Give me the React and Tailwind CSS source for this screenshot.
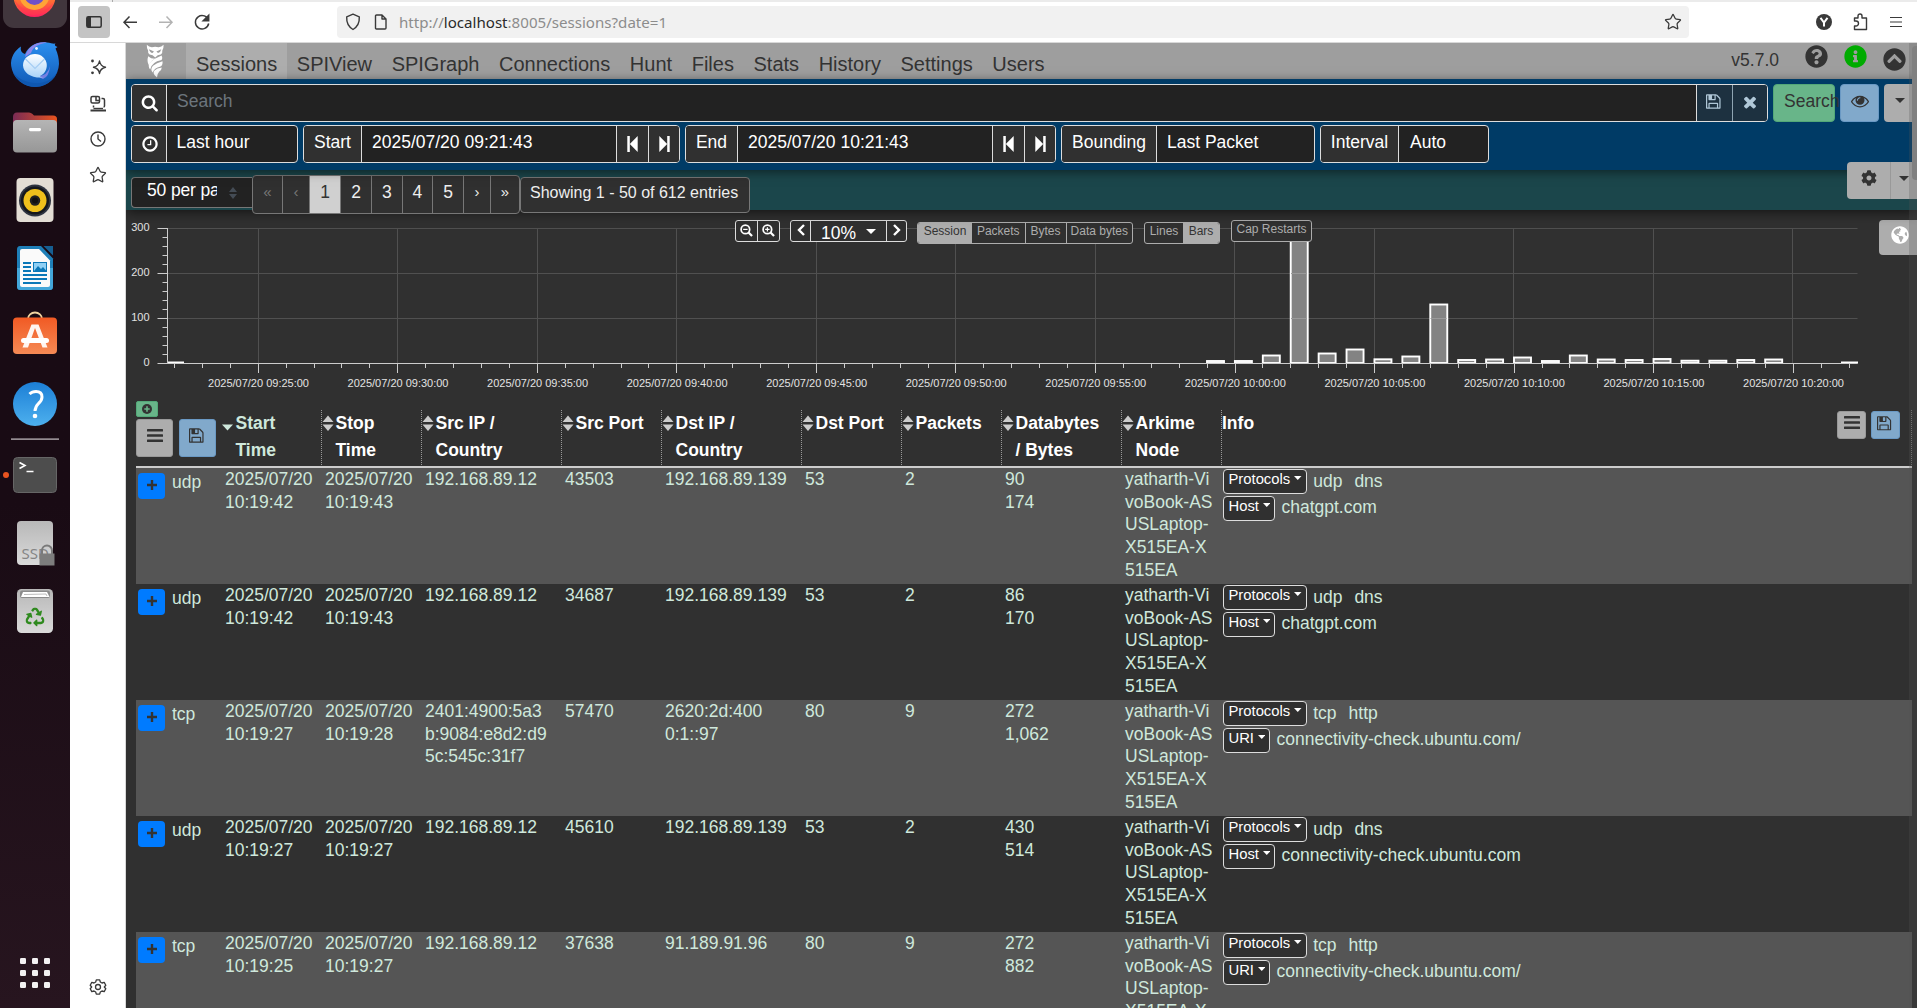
import React from "react";
import {
  FaQuestionCircle,
  FaInfoCircle,
  FaChevronCircleUp,
  FaCog,
  FaGlobeAmericas,
  FaRecycle,
} from "react-icons/fa";
import { Star } from "lucide-react";

const PATHS = {
  save: "M384 1536h768v-384h-768v384zm896 0h128v-896q0-14-10-38.5t-20-34.5l-281-281q-10-10-34-20t-39-10v416q0 40-28 68t-68 28h-576q-40 0-68-28t-28-68v-416h-128v1280h128v-416q0-40 28-68t68-28h832q40 0 68 28t28 68v416zm-384-928v-320q0-13-9.5-22.5t-22.5-9.5h-192q-13 0-22.5 9.5t-9.5 22.5v320q0 13 9.5 22.5t22.5 9.5h192q13 0 22.5-9.5t9.5-22.5zm640 32v928q0 40-28 68t-68 28h-1344q-40 0-68-28t-28-68v-1344q0-40 28-68t68-28h928q40 0 88 20t76 48l280 280q28 28 48 76t20 88z",
  search:
    "M1216 832q0-185-131.5-316.5t-316.5-131.5-316.5 131.5-131.5 316.5 131.5 316.5 316.5 131.5 316.5-131.5 131.5-316.5zm512 832q0 52-38 90t-90 38q-54 0-90-38l-343-342q-179 124-399 124-143 0-273.5-55.5t-225-150-150-225-55.5-273.5 55.5-273.5 150-225 225-150 273.5-55.5 273.5 55.5 225 150 150 225 55.5 273.5q0 220-124 399l343 343q37 37 37 90z",
  clock:
    "M1024 544v448q0 14-9 23t-23 9h-320q-14 0-23-9t-9-23v-64q0-14 9-23t23-9h224v-352q0-14 9-23t23-9h64q14 0 23 9t9 23zm416 352q0-148-73-273t-198-198-273-73-273 73-198 198-73 273 73 273 198 198 273 73 273-73 198-198 73-273zm224 0q0 209-103 385.5t-279.5 279.5-385.5 103-385.5-103-279.5-279.5-103-385.5 103-385.5 279.5-279.5 385.5-103 385.5 103 279.5 279.5 103 385.5z",
  times:
    "M1490 1322q0 40-28 68l-136 136q-28 28-68 28t-68-28l-294-294-294 294q-28 28-68 28t-68-28l-136-136q-28-28-28-68t28-68l294-294-294-294q-28-28-28-68t28-68l136-136q28-28 68-28t68 28l294 294 294-294q28-28 68-28t68 28l136 136q28 28 28 68t-28 68l-294 294 294 294q28 28 28 68z",
  eye: "M1664 960q-152-236-381-353 61 104 61 225 0 185-131.5 316.5t-316.5 131.5-316.5-131.5-131.5-316.5q0-121 61-225-229 117-381 353 133 205 333.5 326.5t434.5 121.5 434.5-121.5 333.5-326.5zm-720-384q0-20-14-34t-34-14q-125 0-214.5 89.5t-89.5 214.5q0 20 14 34t34 14 34-14 14-34q0-86 61-147t147-61q20 0 34-14t14-34zm848 384q0 34-20 69-140 230-376.5 368.5t-499.5 138.5-499.5-139-376.5-368q-20-35-20-69t20-69q140-229 376.5-368t499.5-139 499.5 139 376.5 368q20 35 20 69z",
};

const Glyph = ({ name, size = 18, className = "" }) => (
  <svg viewBox="0 0 1792 1792" width={size} height={size} fill="currentColor" className={`shrink-0 ${className}`}>
    <path d={PATHS[name]} />
  </svg>
);

const Caret = ({ w = 12, h = 6, className = "" }) => (
  <svg viewBox="0 0 12 6" width={w} height={h} fill="currentColor" className={className} preserveAspectRatio="none">
    <path d="M0 0H12L6 6Z" />
  </svg>
);

const Bars = ({ className = "" }) => (
  <svg viewBox="0 0 16 14" width="16" height="14" fill="currentColor" className={className}>
    <rect width="16" height="2.6" rx=".5" />
    <rect y="5.2" width="16" height="2.6" rx=".5" />
    <rect y="10.4" width="16" height="2.6" rx=".5" />
  </svg>
);

/* ---------- Ubuntu dock ---------- */
function Dock() {
  return (
    <div className="h-full w-[70px] shrink-0 overflow-hidden bg-linear-to-b from-[#190b14] from-50% to-[#27151f]">
      <svg width="70" height="1008" viewBox="0 0 70 1008">
        <defs>
          <linearGradient id="fx" x1="0" y1="0" x2="0" y2="1">
            <stop offset="0" stopColor="#ffb52e" />
            <stop offset=".65" stopColor="#ff6a35" />
            <stop offset="1" stopColor="#ff2060" />
          </linearGradient>
          <linearGradient id="tb" x1="0" y1="0" x2="0" y2="1">
            <stop offset="0" stopColor="#2b8fef" />
            <stop offset="1" stopColor="#1059b5" />
          </linearGradient>
          <linearGradient id="en" x1="0" y1="0" x2="0" y2="1">
            <stop offset="0" stopColor="#ffffff" />
            <stop offset="1" stopColor="#a9d3f8" />
          </linearGradient>
          <linearGradient id="gr" x1="0" y1="0" x2="0" y2="1">
            <stop offset="0" stopColor="#b5b5b5" />
            <stop offset="1" stopColor="#979797" />
          </linearGradient>
          <linearGradient id="fo" x1="0" y1="0" x2="1" y2="0">
            <stop offset="0" stopColor="#7a2b55" />
            <stop offset="1" stopColor="#e8541f" />
          </linearGradient>
          <linearGradient id="hp" x1="0" y1="0" x2="0" y2="1">
            <stop offset="0" stopColor="#1c7fd6" />
            <stop offset="1" stopColor="#4db0ee" />
          </linearGradient>
          <linearGradient id="sw" x1="0" y1="0" x2="0" y2="1">
            <stop offset="0" stopColor="#f15a24" />
            <stop offset="1" stopColor="#f58a55" />
          </linearGradient>
          <linearGradient id="tr" x1="0" y1="0" x2="0" y2="1">
            <stop offset="0" stopColor="#b8b8b8" />
            <stop offset="1" stopColor="#dadada" />
          </linearGradient>
        </defs>
        <rect x="3" y="-20" width="64" height="48" rx="11" fill="#41363d" />
        <circle cx="34.500" cy="-4" r="21" fill="url(#fx)" />
        <path d="M14.500 0A21 21 0 0 0 54 2Q44 15 30 11 20 8 14.500 0Z" fill="#ff3a4e" opacity=".55" />
        <circle cx="34.500" cy="-5" r="15" fill="#ffa436" />
        <circle cx="34.500" cy="-5" r="10" fill="#7050c8" />
        {/* Thunderbird */}
        <path d="M11.200 66C10 58 15 50 21 46.500C20 51 22 53 25 54C29 45 38 41 47 42.500C51 43 53 44 55.500 43.500C54 45 55 46 57.500 47L55.500 48.500C58 54 59 59 59 64A24 24 0 0 1 11.200 66Z" fill="url(#tb)" />
        <path d="M13 72A24 24 0 0 0 58 70C54 80 44 84 34 83 24 82 16 77 13 72Z" fill="#0f57b0" />
        <path d="M25 57C27 47 37 41 47 42.500C38 44 33 47 31 53Z" fill="#8d87ea" />
        <path d="M37 76Q48 76 50 66Q49 77 43 79Z" fill="#8d87ea" opacity=".8" />
        <path d="M35 54A12 11.500 0 0 0 23 65.500C23.500 73 31 78.500 44 77.500C41 77 39.500 76.500 40 76C44 74.500 47 70 46.800 65A12 11.500 0 0 0 35 54Z" fill="url(#en)" />
        <path d="M25.500 59L35 68.500L44.500 59" fill="none" stroke="#a5cdf3" strokeWidth="1.200" />
        <circle cx="36.500" cy="48.500" r="1.400" fill="#e6f4ff" />
        {/* Files */}
        <path d="M13 117Q13 112.500 17 112.500H29Q31 112.500 32.500 114L34 115.500H53Q57 115.500 57 119V130H13Z" fill="url(#fo)" />
        <rect x="13" y="120" width="44" height="32.500" rx="4" fill="url(#gr)" />
        <rect x="29" y="128" width="12" height="3.200" rx="1.400" fill="#fff" />
        {/* Rhythmbox */}
        <rect x="16.500" y="178" width="37" height="44" rx="4" fill="#e3ded5" />
        <circle cx="35" cy="200.500" r="16" fill="#2e3440" />
        <circle cx="35" cy="200.500" r="14" fill="#15181d" />
        <circle cx="35" cy="200.500" r="11.500" fill="#efc01c" />
        <circle cx="35" cy="200.500" r="5.200" fill="#222" />
        <circle cx="35" cy="200.500" r="3" fill="#111" />
        {/* Writer */}
        <path d="M20 246H41L53 258.500V286.500Q53 290 49.500 290H20.500Q17 290 17 286.500V249.500Q17 246 20 246Z" fill="#1e7fb8" />
        <path d="M17 268H53V286.500Q53 290 49.500 290H20.500Q17 290 17 286.500Z" fill="#43a6d9" />
        <path d="M43.500 246H53V255.500Z" fill="#165f92" />
        <path d="M22 249H39L50 260.500V285Q50 287 48 287H22Q20 287 20 285V251Q20 249 22 249Z" fill="#fafafa" />
        <path d="M23 263H31M23 267H31M23 271H31M23 275H47M23 279H47M23 283H41" stroke="#0b78b8" strokeWidth="1.900" />
        <rect x="33.500" y="262.500" width="13" height="9" fill="#8fd0f5" stroke="#0b78b8" />
        <path d="M34 271L38 266L41 269L43 267L46.500 271Z" fill="#0b78b8" />
        {/* Software */}
        <path d="M28 321V319A7 6.500 0 0 1 42 319V321" fill="none" stroke="#f1d4a0" strokeWidth="1.800" />
        <rect x="13" y="317.500" width="44" height="36.500" rx="4" fill="url(#sw)" />
        <path d="M31.500 324.500H38.500L47.500 347.500H42.500L35 328L28 347.500H22.500Z" fill="#fff" fillOpacity=".93" />
        <rect x="21" y="338" width="28" height="5" rx="2.500" fill="#fff" />
        {/* Help */}
        <circle cx="35" cy="404" r="22" fill="url(#hp)" />
        <path d="M29.500 394Q32 391.500 36 391.500Q42 391.500 42 397Q42 400.500 38.500 403.500Q35.300 406.500 35 411" fill="none" stroke="#fff" strokeWidth="3" />
        <circle cx="35" cy="416" r="2.300" fill="#fff" />
        <rect x="11" y="438.500" width="48" height="1.200" fill="#c9c4c7" />
        {/* Terminal */}
        <circle cx="6" cy="475" r="3" fill="#e95420" />
        <rect x="13.500" y="457.500" width="43" height="35" rx="4" fill="#4d4d4d" stroke="#666" />
        <path d="M19.500 462.500L25 465.500L19.500 468.500M26.500 471.500H33.500" fill="none" stroke="#fff" strokeWidth="1.600" />
        {/* SSD */}
        <rect x="17" y="521" width="36" height="44" rx="4" fill="url(#tr)" />
        <text x="21.500" y="559" fontSize="15" fill="#858585" fontFamily="Noto Sans">SSD</text>
        <path d="M42 555V550.500A5 5 0 0 1 52 550.500V555" fill="none" stroke="#7a7a7a" strokeWidth="2" />
        <rect x="39.500" y="553.500" width="15" height="12" fill="#7d7d7d" />
        {/* Trash */}
        <rect x="17" y="589" width="36" height="44" rx="4.500" fill="url(#tr)" />
        <rect x="20" y="590.500" width="30" height="7.500" rx="2" fill="#8b8b8b" />
        <path d="M23 592H47L49.500 597H21Z" fill="#fff" />
        <path d="M24 594.500L46 594L47 596" fill="none" stroke="#aaa" strokeWidth=".8" />
        <g transform="translate(25.500 607.500)">
          <FaRecycle size={19} color="#2f8a1f" />
        </g>
        {[0, 1, 2].map((r) =>
          [0, 1, 2].map((c) => (
            <rect key={`${r}${c}`} x={20 + c * 12} y={958 + r * 12} width="6" height="6" rx="1.300" fill="#f3f1f2" />
          ))
        )}
      </svg>
    </div>
  );
}

/* ---------- Browser chrome ---------- */
function Toolbar() {
  return (
    <div className="flex h-[42px] shrink-0 flex-col bg-white">
      <div className="flex h-[2px] bg-[#ebebeb]">
        <div className="ml-[42px] h-[2px] w-px bg-[#aaa]" />
      </div>
      <div className="flex h-10 items-center text-[#3a3a3a]">
        <div className="ml-2 flex h-8 w-8 items-center justify-center rounded-[4px] bg-[#c4c4c4]">
          <svg width="16" height="12" viewBox="0 0 16 12">
            <rect x=".8" y=".8" width="14.400" height="10.400" rx="1.500" fill="none" stroke="#333" strokeWidth="1.500" />
            <rect x="1" y="1" width="4" height="10" fill="#333" />
          </svg>
        </div>
        <svg width="110" height="32" viewBox="110 6 110 32" fill="none" stroke="currentColor" strokeWidth="1.500">
          <path d="M137 22.200H124M129.500 16.500L124 22.200L129.500 27.900" />
          <path d="M159 22.200H172M166.500 16.500L172 22.200L166.500 27.900" stroke="#b3b3b3" />
          <path d="M208.600 20.500A6.700 6.700 0 1 0 208.700 23.500M208.700 15.200V20.700H203.200Z" />
          <path d="M209 15V21H203Z" fill="currentColor" stroke="none" />
        </svg>
        <div className="ml-[117px] flex h-8 w-[1352px] items-center rounded-[4px] bg-[#f1f1f1]">
          <svg className="ml-2" width="16" height="18" viewBox="0 0 16 18" fill="none" stroke="currentColor" strokeWidth="1.400">
            <path d="M8 1.200L14.300 3.800Q14.800 12.500 8 16.500Q1.200 12.500 1.700 3.800Z" strokeLinejoin="round" />
          </svg>
          <svg className="ml-[13px]" width="14" height="16" viewBox="0 0 14 16" fill="none" stroke="currentColor" strokeWidth="1.400" strokeLinejoin="round">
            <path d="M2.500 1H8L12 5V14Q12 15 11 15H2.500Q1.500 15 1.500 14V2Q1.500 1 2.500 1ZM8 1V5H12" />
          </svg>
          <span className="ml-[11px] whitespace-nowrap pt-px font-['Noto_Sans',sans-serif] text-[15.100px] text-[#8c8c8c]">
            http://<span className="text-[#2a2a2a]">localhost</span>:8005/sessions?date=1
          </span>
          <Star size={18} strokeWidth={1.7} className="ml-auto mr-[7px]" />
        </div>
        <svg className="ml-[127px]" width="16" height="16" viewBox="0 0 16 16">
          <circle cx="8" cy="8" r="8" fill="#3a3a3a" />
          <path d="M4.500 3.800L8 8.500L11.500 3.800M8 8.300V12.500" stroke="#fff" strokeWidth="2" fill="none" />
        </svg>
        <svg className="ml-[21px]" width="15" height="18" viewBox="0 0 15 18" fill="none" stroke="currentColor" strokeWidth="1.400" strokeLinejoin="round">
          <path d="M1.500 8V5H5V3A2 2 0 0 1 9 3V5H13.500V16.500H1.500V13H3A2.300 2.300 0 0 0 3 8Z" />
        </svg>
        <svg className="ml-[22px]" width="12" height="12" viewBox="0 0 12 12" stroke="currentColor" strokeWidth="1.200">
          <path d="M0 1.500H12M0 6H12M0 10.500H12" />
        </svg>
      </div>
    </div>
  );
}

function SideStrip() {
  return (
    <div className="flex w-14 shrink-0 flex-col items-center border-r border-[#d8d8d8] bg-white text-[#3a3a3a]">
      <svg className="mt-[15px]" width="18" height="18" viewBox="0 0 18 18">
        <path d="M10.500 3Q11.300 8 16.500 9.300Q11.300 10.500 10.500 15.500Q9.700 10.500 4.500 9.300Q9.700 8 10.500 3Z" fill="none" stroke="currentColor" strokeWidth="1.400" strokeLinejoin="round" />
        <circle cx="3.500" cy="3" r="1.400" fill="currentColor" />
        <circle cx="3.500" cy="14.800" r="1.400" fill="currentColor" />
      </svg>
      <svg className="mt-[19px]" width="18" height="18" viewBox="0 0 18 18" fill="none" stroke="currentColor" strokeWidth="1.500">
        <rect x="2" y="1.500" width="8.500" height="6.500" rx="1.500" />
        <path d="M7 1.500V5.500H10.500M12.500 3.500H14Q15.500 3.500 15.500 5V11Q15.500 12 14.500 12M4.500 12.500V10.500" />
        <path d="M1.500 15.500H17" strokeWidth="2" />
        <path d="M4.500 13.500H14" strokeWidth="1.400" />
      </svg>
      <svg className="mt-[17px]" width="18" height="18" viewBox="0 0 18 18" fill="none" stroke="currentColor" strokeWidth="1.400">
        <circle cx="9" cy="9" r="7" />
        <path d="M9 4.500V9L12 11.500" />
      </svg>
      <Star size={18} strokeWidth={1.7} className="mt-[18px]" />
      <svg className="mb-[12px] mt-auto" width="18" height="18" viewBox="0 0 18 18" fill="none" stroke="currentColor" strokeWidth="1.300">
        <circle cx="9" cy="9" r="2.500" />
        <path d="M7.300 1.800H10.700L11.300 4L13 5L15.200 4.400L16.800 7.300L15.300 9L16.800 10.700L15.200 13.600L13 13L11.300 14L10.700 16.200H7.300L6.700 14L5 13L2.800 13.600L1.200 10.700L2.700 9L1.200 7.300L2.800 4.400L5 5L6.700 4Z" strokeLinejoin="round" />
      </svg>
    </div>
  );
}

/* ---------- Arkime header ---------- */
const NAV = ["SPIView", "SPIGraph", "Connections", "Hunt", "Files", "Stats", "History", "Settings", "Users"];

function NavBar() {
  return (
    <div className="flex h-9 shrink-0 bg-[#9e9e9e] text-[20px] leading-[30px] text-[#333]">
      <div className="w-[60px]">
        <svg width="60" height="36" viewBox="126 43 60 36" fill="#fff">
          <path d="M146.800 44.800Q149 47.300 152 47.200Q155.200 46.200 158.400 47.200Q161.500 47.300 163.600 44.800Q163.800 48.500 162.300 50.500Q162.800 53 160.800 54.600Q157.500 54.800 155.200 57.600Q152.800 54.800 149.600 54.600Q147.600 53 148.100 50.500Q146.600 48.500 146.800 44.800Z" />
          <path d="M149 49.200L154 51.500L152.500 53Q149.800 52.500 149 49.200ZM161.300 49.200L156.400 51.500L158 53Q160.500 52.500 161.300 49.200Z" fill="#9e9e9e" />
          <path d="M148.200 56.200Q146.500 61.500 149 65.500Q150.500 60.500 155.500 58.800Q151 59 148.200 56.200Z" />
          <path d="M161.600 55.500Q163 58 161.600 60Q151.500 62 150.200 69.500Q147 65.500 151 61.500Q154.500 58.500 161.600 55.500Z" />
          <path d="M162.500 61.200Q163 65 160.500 66.500Q154 68 152.800 72.500Q149.800 69.500 153 65.800Q156.500 62.800 162.500 61.200Z" />
          <path d="M161.800 67.500Q161.500 70.500 159.300 71.500Q157 74 157 77.400Q151.800 73.500 154.500 70.500Q157 68 161.800 67.500Z" />
        </svg>
      </div>
      <div className="h-9 w-[101px] bg-[#adadad] pl-2.5 pt-[6px]">Sessions</div>
      {NAV.map((n) => (
        <div key={n} className="px-[9.800px] pt-[6px]">
          {n}
        </div>
      ))}
      <div className="ml-auto pt-[1.500px] text-[17.500px]">v5.7.0</div>
      <FaQuestionCircle size={23} className="ml-[26px] mt-[2px]" />
      <FaInfoCircle size={23} className="ml-[16px] mt-[2px] text-[#00ab00]" />
      <FaChevronCircleUp size={23} className="ml-[16px] mr-[11px] mt-[5px]" />
    </div>
  );
}

const group = "flex h-[38px] shrink-0 overflow-hidden rounded-[4px] border border-[#ddd] bg-[#222]";
const label = "flex shrink-0 items-center justify-center border-r border-[#ddd] bg-[#303030] pb-1";

const Step = ({ flip }) => (
  <svg width="11" height="16" viewBox="0 0 11 16" fill="currentColor" className={flip ? "-scale-x-100" : ""}>
    <rect x=".3" width="2.500" height="16" />
    <path d="M10.700 0V16L2.800 8Z" />
  </svg>
);

function DateField({ name, value, className, labelClass }) {
  return (
    <div className={`${group} ${className}`}>
      <div className={`${label} ${labelClass}`}>{name}</div>
      <div className="flex flex-1 items-center pb-1 pl-2.5">{value}</div>
      <div className="flex w-8 items-center justify-center border-l border-[#ddd] bg-[#303030]">
        <Step />
      </div>
      <div className="flex w-[31px] items-center justify-center border-l border-[#ddd] bg-[#303030]">
        <Step flip />
      </div>
    </div>
  );
}

function SearchPanel() {
  return (
    <div className="relative z-10 flex h-[91px] shrink-0 flex-col gap-[3px] bg-[#003b66] pl-[5px] pt-[5px] text-[17.500px] text-white shadow-[0_2px_10px_rgba(0,0,0,0.5)]">
      <div className="flex gap-[5px]">
        <div className="flex h-[38px] w-[1637px] shrink-0 overflow-hidden rounded-[4px] border border-[#ddd] bg-[#222]">
          <div className="flex w-[35px] items-center justify-center border-r border-[#ddd] bg-[#303030] pl-px">
            <Glyph name="search" size={17.5} />
          </div>
          <div className="flex flex-1 items-center pb-1 pl-[10px] text-[#6c757d]">Search</div>
          <div className="flex w-9 items-center justify-center border-l border-[#ddd] bg-[#1d3140] pb-[3px] text-[#b0c8d8]">
            <Glyph name="save" size={17} />
          </div>
          <div className="flex w-[35px] items-center justify-center border-l border-[#8fa5b3] bg-[#1d3140] pb-[3px] text-[#b0c8d8]">
            <Glyph name="times" size={18} />
          </div>
        </div>
        <div className="flex h-[38px] w-[62px] shrink-0 items-center whitespace-nowrap rounded-[4px] border border-[#53a878] bg-[#68b589] pb-1 pl-2.5 text-[#333]">
          Search
        </div>
        <div className="flex h-[38px] w-[39px] shrink-0 items-center justify-center rounded-[4px] border border-[#6a99c4] bg-[#81a9cb] pb-1 text-[#333]">
          <Glyph name="eye" size={18} />
        </div>
        <div className="flex h-[38px] flex-1 items-center rounded-l-[4px] bg-[#adadad] pb-1.5 pl-[11px] text-[#333]">
          <Caret w={10} h={5} />
        </div>
      </div>
      <div className="flex gap-[5px]">
        <div className={`${group} w-[167px]`}>
          <div className="flex w-[35px] items-center justify-center border-r border-[#ddd] bg-[#303030] pl-px">
            <Glyph name="clock" size={18} />
          </div>
          <div className="flex items-center pb-1 pl-[9.500px]">Last hour</div>
        </div>
        <DateField name="Start" value="2025/07/20 09:21:43" className="w-[377px]" labelClass="w-[58px]" />
        <DateField name="End" value="2025/07/20 10:21:43" className="w-[371px]" labelClass="w-[52px]" />
        <div className={`${group} w-[254px]`}>
          <div className={`${label} w-[95px]`}>Bounding</div>
          <div className="flex items-center pb-1 pl-2.5">Last Packet</div>
        </div>
        <div className={`${group} w-[169px]`}>
          <div className={`${label} w-[78px]`}>Interval</div>
          <div className="flex items-center pb-1 pl-[11px]">Auto</div>
        </div>
      </div>
      <div className="absolute right-0 top-[83px] flex h-[37px] w-[70px] rounded-l-[4px] bg-[#adadad] text-[#333]">
        <div className="flex w-[44px] items-center justify-center border-r border-[#999] pb-[5px]">
          <FaCog size={16} />
        </div>
        <Caret w={10} h={5} className="ml-2 mt-[14px]" />
      </div>
    </div>
  );
}

const PAGES = [
  ["«", "w-[29px] text-[15px] text-[#777]"],
  ["‹", "w-[27px] text-[15px] text-[#777]"],
  ["1", "w-[31px] bg-[#d0d0d0] text-[#333]"],
  ["2", "w-[31px]"],
  ["3", "w-[30.500px]"],
  ["4", "w-[30.500px]"],
  ["5", "w-[31px]"],
  ["›", "w-[27px] text-[15px]"],
  ["»", "w-[29px] text-[15px]"],
];

function Paging() {
  return (
    <div className="relative z-[5] flex h-10 shrink-0 bg-[#1b464b] pl-[5px] text-[17.500px] text-[#eee] shadow-[0_2px_12px_rgba(0,0,0,0.6)]">
      <div className="mt-[7px] flex h-[31px] w-[121px] items-center rounded-l-[4px] border border-r-0 border-[#777] bg-[#222] pb-1 pl-[15px] text-white">
        <span className="w-[70px] overflow-hidden whitespace-nowrap tracking-[-0.15px]">50 per page</span>
        <svg width="8" height="12" viewBox="0 0 8 12" fill="#444c55" className="ml-[12px] mt-1">
          <path d="M0 5L4 0L8 5ZM0 7H8L4 12Z" />
        </svg>
      </div>
      <div className="mt-[5px] flex h-[39px] shrink-0 overflow-hidden rounded-[4px] border border-[#777] bg-[#303030]">
        {PAGES.map(([t, c], i) => (
          <div key={i} className={`flex items-center justify-center pb-[5px] ${i ? "border-l border-[#777]" : ""} ${c}`}>
            {t}
          </div>
        ))}
      </div>
      <div className="mt-[7px] flex h-[35.500px] w-[230px] items-center rounded-[4px] border border-[#777] bg-[#303030] pb-1 pl-[9px] text-[16px]">
        Showing 1 - 50 of 612 entries
      </div>
    </div>
  );
}

/* ---------- Timeline chart ---------- */
const BAR_TOPS = [
  361, 361, 355.5, 240, 353.5, 349.5, 359.3, 356.5, 304.5, 360, 359.5, 357.5, 361, 355.5, 359.5, 360, 359, 360.7, 360.7, 360, 359.5,
];
const TIMES = ["09:25", "09:30", "09:35", "09:40", "09:45", "09:50", "09:55", "10:00", "10:05", "10:10", "10:15", "10:20"];
const STEP = 27.909;

const ZoomGlass = ({ plus }) => (
  <svg width="13" height="13" viewBox="0 0 14 14" fill="none" stroke="#fff" strokeWidth="1.900">
    <circle cx="5.800" cy="5.800" r="4.600" />
    <path d="M9.200 9.200L13 13" strokeWidth="2.400" />
    <path d={plus ? "M3.400 5.800H8.200M5.800 3.400V8.200" : "M3.400 5.800H8.200"} strokeWidth="1.300" />
  </svg>
);

const Chevron = ({ flip }) => (
  <svg width="8" height="12" viewBox="0 0 8 12" fill="none" stroke="#fff" strokeWidth="2.400" className={flip ? "-scale-x-100" : ""}>
    <path d="M7 1L2 6L7 11" />
  </svg>
);

function Timeline() {
  return (
    <div className="relative h-[190px] shrink-0">
      <svg width="1791" height="190" viewBox="126 210 1791 190" fontFamily="Liberation Sans" fontSize="11">
        {[228.5, 273.5, 318.5].map((y) => (
          <path key={y} d={`M168 ${y}H1857.500`} stroke="#505050" />
        ))}
        {TIMES.map((t, i) => (
          <path key={t} d={`M${Math.floor(258 + i * 139.545) + 0.5} 228V363`} stroke="#505050" />
        ))}
        {BAR_TOPS.map((y, i) => (
          <rect key={i} x={1207 + i * STEP} y={y} width="17" height={363 - y} fill="#838383" stroke="#fff" strokeWidth="1.900" />
        ))}
        <path d="M1291 273.500H1307" stroke="#9a9a9a" />
        <path d="M1291 318.500H1307M1430.500 318.500H1446.500" stroke="#9a9a9a" />
        <path d="M167 362.500H184M1841 362.500H1858" stroke="#fff" strokeWidth="2" />
        <path d="M167.500 228V363.500H1857.500" fill="none" stroke="#ccc" />
        {Array.from({ length: 16 }, (_, i) => (
          <path key={i} d={`M${i % 5 ? 162.5 : 157.5} ${228.5 + i * 9}H167.500`} stroke="#ccc" />
        ))}
        {Array.from({ length: 61 }, (_, i) => (
          <path key={i} d={`M${Math.floor(174.5 + i * STEP) + 0.5} 363V${(i + 2) % 5 ? 368 : 373}`} stroke="#ccc" />
        ))}
        {["300", "200", "100", "0"].map((t, i) => (
          <text key={t} x="149.500" y={231 + i * 45} textAnchor="end" fill="#e3e3e3">
            {t}
          </text>
        ))}
        {TIMES.map((t, i) => (
          <text key={t} x={258.5 + i * 139.545} y="387" textAnchor="middle" fill="#e3e3e3">
            {`2025/07/20 ${t}:00`}
          </text>
        ))}
      </svg>
      <div className="absolute left-[609px] top-[10px] flex h-[23px] items-start text-[12px] leading-[17px] text-[#adadad]">
        <div className="flex h-[22px] w-[45px] rounded-[3px] border border-[#ddd] bg-[#303030]">
          <div className="flex flex-1 items-center justify-center border-r border-[#ddd] pb-0.5">
            <ZoomGlass />
          </div>
          <div className="flex flex-1 items-center justify-center pb-0.5">
            <ZoomGlass plus />
          </div>
        </div>
        <div className="ml-[10px] flex h-[22px] w-[117px] rounded-[3px] border border-[#ddd] bg-[#303030] text-white">
          <div className="flex w-5 items-center justify-center border-r border-[#ddd] pb-0.5">
            <Chevron />
          </div>
          <div className="flex flex-1 items-center pl-[10px] pt-1 text-[17.500px]">
            10%
            <Caret w={10} h={5} className="mb-1 ml-[10px]" />
          </div>
          <div className="flex w-5 items-center justify-center border-l border-[#ddd] pb-0.5">
            <Chevron flip />
          </div>
        </div>
        <div className="ml-[10px] mt-[2px] flex h-[22px] w-[216px] overflow-hidden rounded-[3px] border border-[#adadad] bg-[#303030] text-center">
          <div className="w-[54px] bg-[#adadad] text-[#333]">Session</div>
          <div className="w-[52.500px]">Packets</div>
          <div className="w-[41px] border-l border-[#adadad]">Bytes</div>
          <div className="flex-1 border-l border-[#adadad]">Data bytes</div>
        </div>
        <div className="ml-[11px] mt-[2px] flex h-[22px] w-[76px] overflow-hidden rounded-[3px] border border-[#adadad] bg-[#303030] text-center">
          <div className="w-[38px]">Lines</div>
          <div className="flex-1 bg-[#adadad] text-[#333]">Bars</div>
        </div>
        <div className="ml-[11px] h-[22px] w-[81px] whitespace-nowrap rounded-[3px] border border-[#adadad] bg-[#303030] pl-[4.500px]">
          Cap Restarts
        </div>
      </div>
      <div className="absolute right-0 top-[10px] flex h-[35px] w-[38px] rounded-l-[4px] bg-[#adadad] pl-[12px] pt-[6px] text-white">
        <FaGlobeAmericas size={18} />
      </div>
    </div>
  );
}

/* ---------- Sessions table ---------- */
const COLS = [
  ["Start\nTime", "w-[100px]"],
  ["Stop\nTime", "w-[100px]"],
  ["Src IP /\nCountry", "w-[140px]"],
  ["Src Port", "w-[100px]"],
  ["Dst IP /\nCountry", "w-[140px]"],
  ["Dst Port", "w-[100px]"],
  ["Packets", "w-[100px]"],
  ["Databytes\n/ Bytes", "w-[120px]"],
  ["Arkime\nNode", "w-[100px]"],
];
const NODE = "yatharth-Vi\nvoBook-AS\nUSLaptop-\nX515EA-X\n515EA";
const D = "2025/07/20\n";
const SRC = "192.168.89.12";
const UBUNTU = "connectivity-check.ubuntu.com";
const ROWS = [
  { proto: "udp", cells: [D + "10:19:42", D + "10:19:43", SRC, "43503", "192.168.89.139", "53", "2", "90\n174", NODE], info: ["udp", "dns", "Host", "chatgpt.com"] },
  { proto: "udp", cells: [D + "10:19:42", D + "10:19:43", SRC, "34687", "192.168.89.139", "53", "2", "86\n170", NODE], info: ["udp", "dns", "Host", "chatgpt.com"] },
  { proto: "tcp", cells: [D + "10:19:27", D + "10:19:28", "2401:4900:5a3\nb:9084:e8d2:d9\n5c:545c:31f7", "57470", "2620:2d:400\n0:1::97", "80", "9", "272\n1,062", NODE], info: ["tcp", "http", "URI", UBUNTU + "/"] },
  { proto: "udp", cells: [D + "10:19:27", D + "10:19:27", SRC, "45610", "192.168.89.139", "53", "2", "430\n514", NODE], info: ["udp", "dns", "Host", UBUNTU] },
  { proto: "tcp", cells: [D + "10:19:25", D + "10:19:27", SRC, "37638", "91.189.91.96", "80", "9", "272\n882", NODE], info: ["tcp", "http", "URI", UBUNTU + "/"] },
];

function TableHead() {
  return (
    <div className="ml-[10px] mr-[5px] flex h-[68px] shrink-0 border-b-2 border-[#ccc] text-[17.500px] font-bold leading-[27.300px] text-white">
      <div className="w-[86px] shrink-0 text-[#333]">
        <div className="mt-px flex h-4 w-[22px] items-center justify-center rounded-[2px] border border-[#53a878] bg-[#68b589]">
          <svg width="10" height="10" viewBox="0 0 10 10">
            <circle cx="5" cy="5" r="5" fill="#333" />
            <path d="M2.300 5H7.700M5 2.300V7.700" stroke="#68b589" strokeWidth="1.600" />
          </svg>
        </div>
        <div className="mt-[2px] flex gap-[6px]">
          <div className="flex h-[38px] w-[37px] items-center justify-center rounded-[3px] border border-[#999] bg-[#adadad] pb-[5px]">
            <Bars />
          </div>
          <div className="flex h-[38px] w-[37px] items-center justify-center rounded-[3px] border border-[#6a99c4] bg-[#81a9cb] pb-[5px]">
            <Glyph name="save" size={17} />
          </div>
        </div>
      </div>
      {COLS.map(([t, w], i) => (
        <div key={t} className={`mt-[10px] flex h-[55px] shrink-0 border-r border-dotted border-[#999] ${w} ${i ? "" : "text-[#cfe8dc]"}`}>
          <svg className="mt-[5px] shrink-0" width="12" height="17" viewBox="0 0 12 17" fill={i ? "#ccc" : "#cfe8dc"}>
            {i > 0 && <path d="M0.500 7L6 0.500L11.500 7Z" />}
            <path d={i ? "M0.500 9.500H11.500L6 16Z" : "M0 9.500H11L5.500 15.500Z"} />
          </svg>
          <div className="-mr-2 whitespace-pre pl-[1.500px]">{t}</div>
        </div>
      ))}
      <div className="mt-[10px] flex h-[55px] flex-1 border-r border-dotted border-[#777]">
        Info
        <div className="ml-auto mr-[11px] mt-px flex gap-[5px] text-[#333]">
          <div className="flex h-7 w-[29px] items-center justify-center rounded-[3px] border border-[#999] bg-[#adadad] pb-1">
            <Bars />
          </div>
          <div className="flex h-7 w-[29px] items-center justify-center rounded-[3px] border border-[#6a99c4] bg-[#81a9cb] pb-1">
            <Glyph name="save" size={16.500} />
          </div>
        </div>
      </div>
    </div>
  );
}

const Tag = ({ children }) => (
  <span className="flex h-[25px] items-center rounded-[4px] border border-[#ddd] bg-[#303030] pb-[4px] pl-[4.500px] pr-[4px] text-[14.800px] text-white">
    {children}
    <Caret w={7.500} h={4} className="mb-[3px] ml-1" />
  </span>
);

function Row({ row, odd }) {
  const [a, b, key, value] = row.info;
  return (
    <div className={`ml-[10px] mr-[5px] flex h-[116px] shrink-0 text-[17.500px] leading-[22.900px] text-[#cfe8dc] ${odd ? "bg-[#555]" : "bg-[#303030]"}`}>
      <div className="flex w-[86px] shrink-0">
        <div className="ml-[2px] mt-[5px] flex h-[26px] w-[27px] items-center justify-center rounded-[4px] bg-[#007bff] pb-[3px] pl-px">
          <svg width="10" height="10" viewBox="0 0 10 10" stroke="#333" strokeWidth="2.400">
            <path d="M0 5H10M5 0V10" />
          </svg>
        </div>
        <div className="ml-[7px] mt-[2.500px]">{row.proto}</div>
      </div>
      {row.cells.map((c, i) => (
        <div key={i} className={`-mt-[0.400px] shrink-0 whitespace-pre pl-[3px] ${COLS[i][1]}`}>
          {c}
        </div>
      ))}
      <div className="pl-[1px] pt-px">
        <div className="flex h-[26.500px]">
          <Tag>Protocols</Tag>
          <span className="ml-[6.500px] mt-[0.500px]">{a}</span>
          <span className="ml-[12px] mt-[0.500px]">{b}</span>
        </div>
        <div className="flex">
          <Tag>{key}</Tag>
          <span className="ml-[6px]">{value}</span>
        </div>
      </div>
    </div>
  );
}

export default function App() {
  return (
    <div className="flex h-[1008px] w-[1917px] overflow-hidden bg-white font-['Liberation_Sans',Arial,sans-serif]">
      <Dock />
      <div className="flex min-w-0 flex-1 flex-col">
        <Toolbar />
        <div className="flex min-h-0 flex-1 border-t border-[#d8d8d8]">
          <SideStrip />
          <div className="relative flex min-w-0 flex-1 flex-col overflow-hidden bg-[#303030]">
            <NavBar />
            <SearchPanel />
            <Paging />
            <Timeline />
            <TableHead />
            {ROWS.map((r, i) => (
              <Row key={i} row={r} odd={i % 2 === 0} />
            ))}
            <div className="absolute right-0 top-0 z-20 h-full w-2 bg-[#555]/25">
              <div className="ml-[3px] mt-[3px] h-[134px] w-[5px] rounded-l bg-[#808080]" />
            </div>
          </div>
        </div>
      </div>
    </div>
  );
}
